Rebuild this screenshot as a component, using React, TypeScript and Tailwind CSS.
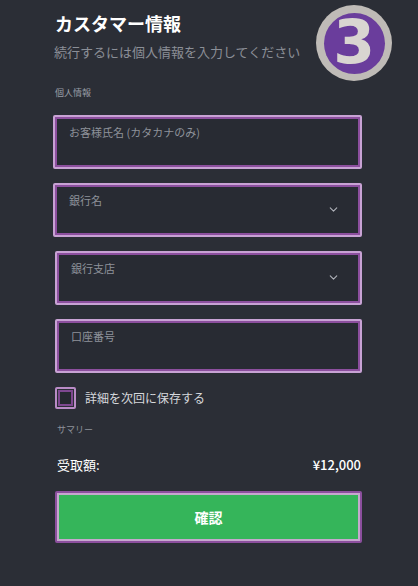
import { ChevronDown } from 'lucide-react';

const font = { fontFamily: '"Noto Sans CJK JP", "Noto Sans", sans-serif' };

const Field = ({ label, select = false }: { label: string; select?: boolean }) => (
  <div className="border-2 border-[#c8a2d4] rounded-[2px]">
    <div className="relative h-[50px] border-2 border-[#8c4f9e] bg-[#282b33] px-3 pt-[5px]">
      <span className="block text-[11px] leading-[16px] text-[#8e929a]">{label}</span>
      {select && (
        <ChevronDown className="absolute right-[18px] top-[16px] w-[13px] h-[13px] text-[#b0b3ba]" strokeWidth={2} />
      )}
    </div>
  </div>
);

export default function App() {
  return (
    <div className="relative w-[418px] h-[586px] bg-[#2b2e36] overflow-hidden" style={font}>
      {/* step badge */}
      <div className="absolute left-[316px] top-[5px] w-[76px] h-[76px] rounded-full bg-[#bfbbb7] flex items-center justify-center">
        <div className="w-[61px] h-[61px] rounded-full bg-[#6a3d9c] flex items-center justify-center">
          <span
            className="text-[60px] leading-none font-black text-[#d9d5d1] -mt-[2px]"
            style={{ fontFamily: '"DejaVu Sans", sans-serif' }}
          >
            3
          </span>
        </div>
      </div>

      <div className="flex flex-col pl-[53px] pr-[56px] pt-[10px]">
        <h1 className="text-[18px] leading-[26px] font-bold text-white pl-[2px]">カスタマー情報</h1>
        <p className="mt-[6px] text-[13px] leading-[20px] text-[#8b8f97] pl-[1px]">
          続行するには個人情報を入力してください
        </p>
        <p className="mt-[25px] text-[9px] leading-[12px] text-[#9a9ea6] pl-[2px]">個人情報</p>

        <div className="mt-[16px] flex flex-col gap-[14px]">
          <Field label="お客様氏名 (カタカナのみ)" />
          <Field label="銀行名" select />
          <div className="pl-[2px]">
            <Field label="銀行支店" select />
          </div>
          <div className="pl-[2px]">
            <Field label="口座番号" />
          </div>
        </div>

        <label className="mt-[14px] ml-[2px] flex items-center gap-[9px]">
          <span className="w-[21px] h-[22px] border-2 border-[#b98bc6] rounded-[2px] flex items-center justify-center">
            <span className="w-[15px] h-[16px] border-2 border-[#7e4890] bg-[#262930]" />
          </span>
          <span className="text-[12px] leading-[20px] text-[#d6d8dc]">詳細を次回に保存する</span>
        </label>

        <p className="mt-[14px] pl-[4px] text-[9px] leading-[14px] text-[#8e929a]">サマリー</p>

        <div className="mt-[18px] pl-[4px] flex items-center justify-between text-[13px] leading-[20px] text-white">
          <span>受取額:</span>
          <span className="font-medium pr-[1px]">¥12,000</span>
        </div>

        <div className="mt-[16px] ml-[2px] border-2 border-[#8c4f9e] rounded-[2px]">
          <div className="h-[48px] border-2 border-[#c6a8ce] bg-[#35b55a] flex items-center justify-center">
            <span className="text-[14px] font-bold text-white">確認</span>
          </div>
        </div>
      </div>
    </div>
  );
}
